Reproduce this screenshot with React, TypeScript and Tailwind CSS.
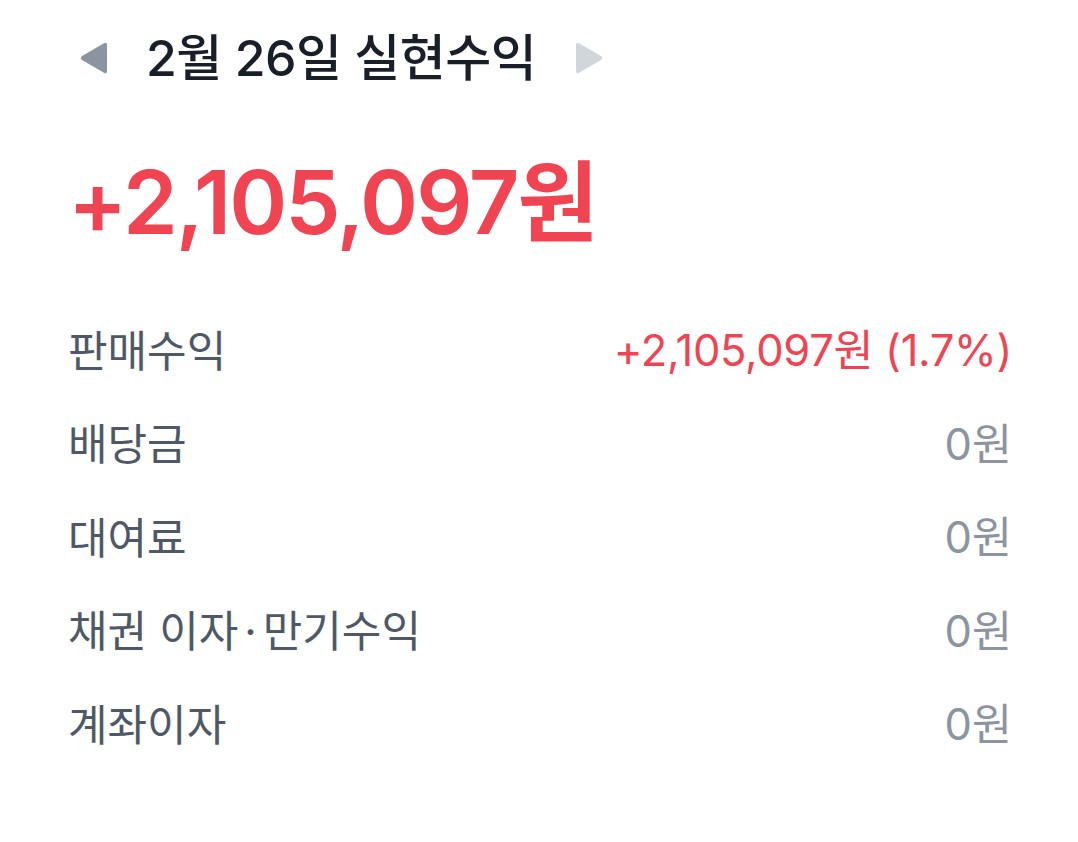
const rows = [
  { label: "판매수익", value: "+2,105,097원 (1.7%)", red: true },
  { label: "배당금", value: "0원" },
  { label: "대여료", value: "0원" },
  { label: "채권 이자·만기수익", value: "0원" },
  { label: "계좌이자", value: "0원" },
];

function Triangle({ dir, color }: { dir: "left" | "right"; color: string }) {
  return (
    <svg width="30" height="34" viewBox="0 0 30 34" className={color}>
      {dir === "left" ? (
        <path d="M28 4 Q28 0.5 25 2.2 L3 15 Q0.5 17 3 19 L25 31.8 Q28 33.5 28 30 Z" fill="currentColor" />
      ) : (
        <path d="M2 4 Q2 0.5 5 2.2 L27 15 Q29.5 17 27 19 L5 31.8 Q2 33.5 2 30 Z" fill="currentColor" />
      )}
    </svg>
  );
}

function Label({ text }: { text: string }) {
  // the middle dot sits in a wider gap in the reference
  const parts = text.split("·");
  if (parts.length === 1) return <>{text}</>;
  return (
    <>
      {parts[0]}
      <span className="mx-[6px]">·</span>
      {parts[1]}
    </>
  );
}

export default function App() {
  return (
    <div
      className="w-[1078px] h-[842px] bg-white pl-[68px] pr-[66px] pt-[24px]"
      style={{ fontFamily: 'Inter, "Noto Sans CJK KR", sans-serif' }}
    >
      <div className="flex items-center h-[68px] pl-[11px]">
        <Triangle dir="left" color="text-[#8b95a1]" />
        <h1 className="ml-[37px] mr-[38px] text-[50px] font-medium text-[#191f28] tracking-[-0.5px]">
          2월 26일 실현수익
        </h1>
        <Triangle dir="right" color="text-[#d1d6db]" />
      </div>

      <div className="mt-[55px] text-[88px] font-semibold text-[#f04452] leading-[110px] tracking-[-2px]">
        +2,105,097원
      </div>

      <div className="mt-[47px] flex flex-col">
        {rows.map((r) => (
          <div key={r.label} className="flex items-center justify-between h-[93.5px]">
            <span className="text-[43px] text-[#4e5968]">
              <Label text={r.label} />
            </span>
            <span className={r.red ? "text-[43.5px] text-[#f04452] tracking-[-0.3px]" : "text-[43.5px] text-[#8b95a1]"}>
              {r.value}
            </span>
          </div>
        ))}
      </div>
    </div>
  );
}
